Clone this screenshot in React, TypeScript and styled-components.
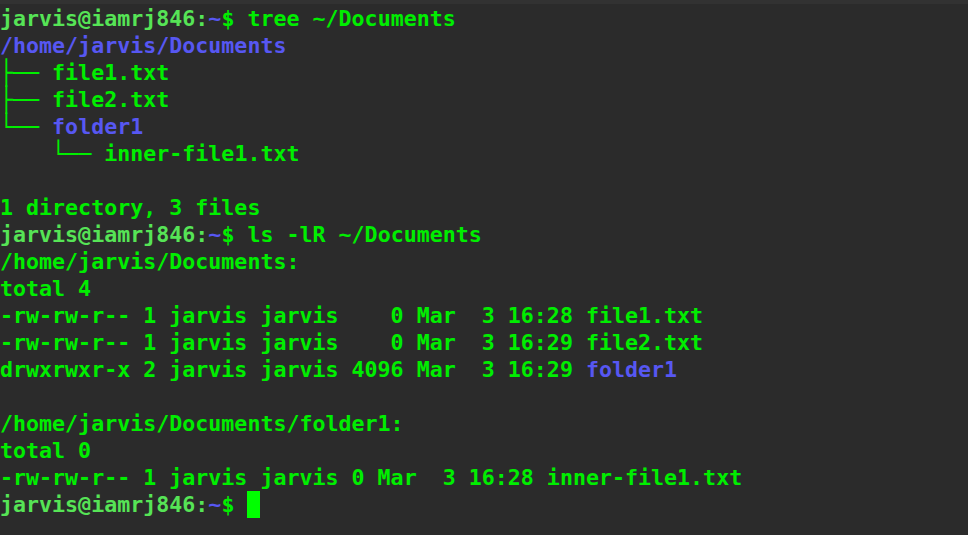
import React from "react";
import styled, { createGlobalStyle } from "styled-components";

const GREEN = "#00ee00";
const PROMPT = "#56e456";
const BLUE = "#5757f2";

const Global = createGlobalStyle`
  html, body {
    margin: 0;
    padding: 0;
    background: #2b2b2b;
  }
`;

const Terminal = styled.div`
  width: 968px;
  height: 535px;
  box-sizing: border-box;
  background: #2b2b2b;
  border-top: 4px solid #323232;
  padding-top: 1px;
  overflow: hidden;
  font-family: "DejaVu Sans Mono", "Liberation Mono", monospace;
  font-weight: bold;
  font-size: 21.6px;
  letter-spacing: 0.02px;
  line-height: 27px;
  color: ${GREEN};
`;

const Line = styled.div`
  height: 27px;
  white-space: pre;
`;

const Seg = styled.span<{ $c?: string }>`
  color: ${(p) => p.$c ?? GREEN};
`;

const Branch = styled.span`
  display: inline-block;
  transform: scaleY(1.12);
  color: ${GREEN};
`;

const Cursor = styled.span`
  display: inline-block;
  width: 13px;
  height: 27px;
  vertical-align: top;
  background: #00ff00;
`;

const Prompt: React.FC<{ cmd?: string; cursor?: boolean }> = ({ cmd, cursor }) => (
  <Line>
    <Seg $c={PROMPT}>jarvis@iamrj846:</Seg>
    <Seg $c={BLUE}>~</Seg>
    <Seg>$ </Seg>
    {cmd && <Seg>{cmd}</Seg>}
    {cursor && <Cursor />}
  </Line>
);

export default function App() {
  return (
    <>
      <Global />
      <Terminal>
        <Prompt cmd="tree ~/Documents" />
        <Line><Seg $c={BLUE}>/home/jarvis/Documents</Seg></Line>
        <Line><Branch>├──</Branch><Seg> file1.txt</Seg></Line>
        <Line><Branch>├──</Branch><Seg> file2.txt</Seg></Line>
        <Line><Branch>└──</Branch><Seg> </Seg><Seg $c={BLUE}>folder1</Seg></Line>
        <Line><Seg>    </Seg><Branch>└──</Branch><Seg> inner-file1.txt</Seg></Line>
        <Line> </Line>
        <Line>1 directory, 3 files</Line>
        <Prompt cmd="ls -lR ~/Documents" />
        <Line>/home/jarvis/Documents:</Line>
        <Line>total 4</Line>
        <Line>-rw-rw-r-- 1 jarvis jarvis    0 Mar  3 16:28 file1.txt</Line>
        <Line>-rw-rw-r-- 1 jarvis jarvis    0 Mar  3 16:29 file2.txt</Line>
        <Line>drwxrwxr-x 2 jarvis jarvis 4096 Mar  3 16:29 <Seg $c={BLUE}>folder1</Seg></Line>
        <Line> </Line>
        <Line>/home/jarvis/Documents/folder1:</Line>
        <Line>total 0</Line>
        <Line>-rw-rw-r-- 1 jarvis jarvis 0 Mar  3 16:28 inner-file1.txt</Line>
        <Prompt cursor />
      </Terminal>
    </>
  );
}
